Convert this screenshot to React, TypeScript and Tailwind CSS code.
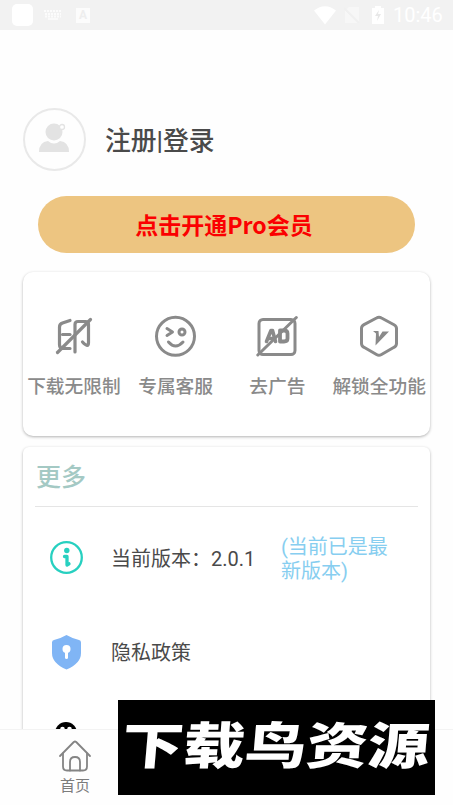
import type { ReactNode } from 'react';

const features: { label: string; icon: ReactNode }[] = [
  { label: '下载无限制', icon: <NoWatermarkIcon /> },
  { label: '专属客服', icon: <WinkIcon /> },
  { label: '去广告', icon: <NoAdIcon /> },
  { label: '解锁全功能', icon: <UnlockIcon /> },
];

function NoWatermarkIcon() {
  return (
    <svg className="w-[42px] h-[42px]" viewBox="0 0 42 42" fill="none" stroke="#8a8a8a" strokeWidth={3.2} strokeLinecap="round" strokeLinejoin="round">
      <path d="M17 5.5L9.5 8Q6.5 9 6.500 12V29.500Q6.500 33.500 10 33.500H17" />
      <path d="M9.500 19.500H17" />
      <path d="M22 37V9.500Q22 6.500 25 6.500H32.500Q35.500 6.500 35.500 9.500V27.500Q35.500 33.500 29.500 27" />
      <path d="M4.500 37.500L37.500 4.500" />
    </svg>
  );
}

function WinkIcon() {
  return (
    <svg className="w-[42px] h-[42px]" viewBox="0 0 42 42" fill="none" stroke="#8a8a8a" strokeWidth={3} strokeLinecap="round" strokeLinejoin="round">
      <circle cx="20.500" cy="21.300" r="19" />
      <path d="M12 13.500L17.500 17L12 20.500" />
      <circle cx="27" cy="17" r="3" />
      <path d="M13.500 27Q20.500 35 28 27" />
    </svg>
  );
}

function NoAdIcon() {
  return (
    <svg className="w-[42px] h-[42px]" viewBox="0 0 42 42" fill="none" stroke="#8a8a8a" strokeWidth={3} strokeLinecap="round" strokeLinejoin="round">
      <rect x="3" y="4.500" width="36" height="35" rx="4" />
      <path d="M10.500 26.500L15 15.500H16.500L19.500 26.500M12 23.500H18" strokeWidth={3.600} />
      <path d="M24 15.500H28Q31.500 15.500 31.500 18.500V23.500Q31.500 26.500 28 26.500H24Z" strokeWidth={3.800} />
      <path d="M1.800 40L40.300 2.500" />
    </svg>
  );
}

function UnlockIcon() {
  return (
    <svg className="w-[42px] h-[42px]" viewBox="0 0 42 42" fill="none" stroke="#8a8a8a" strokeWidth={3} strokeLinejoin="round">
      <path d="M18.500 3Q21 1.500 23.500 3L36 9.700Q38.500 11 38.500 13.500V28.500Q38.500 31 36 32.300L23.500 39.500Q21 41 18.500 39.500L6 32.300Q3.500 31 3.500 28.500V13.500Q3.500 11 6 9.700Z" />
      <path d="M15 16H20.500L21 22L24.500 16.500H31L17.500 30.500L18 18.500Z" fill="#8a8a8a" stroke="none" />
    </svg>
  );
}

function StatusBar() {
  return (
    <header className="h-[30px] shrink-0 bg-[#f2f2f2] flex items-center pl-3 pr-[10px] text-white">
      <div className="w-[21px] h-[22px] rounded-[5px] bg-white" />
      <svg className="w-[18px] h-[10px] ml-[11px]" viewBox="0 0 18 10" stroke="#fcfcfc" strokeWidth={2}>
        <path d="M0 1H18" strokeDasharray="2 1" />
        <path d="M1 4H17" strokeDasharray="2 1" />
        <path d="M1 6.500H17" strokeDasharray="2 1" />
        <path d="M4 9H14" strokeWidth={1.500} />
      </svg>
      <div className="w-[14px] h-[15px] ml-[14px] bg-[#fcfcfc] text-[#eeeeee] text-xs leading-[15px] font-bold text-center">A</div>
      <div className="ml-auto flex items-center">
        <svg className="w-[22px] h-[19px]" viewBox="0 0 22 19" fill="white">
          <path d="M0 4.500Q11 -4 22 4.500L11 18.500Z" />
        </svg>
        <svg className="w-4 h-4 ml-2" viewBox="0 0 16 16">
          <path d="M5 0H15V16H1V4Z" fill="#f7f7f7" />
          <path d="M0 1L15 16" stroke="#f0f0f0" strokeWidth={2} />
        </svg>
        <svg className="w-3 h-[18px] ml-3" viewBox="0 0 12 18">
          <path d="M3 0H9V2H12V18H0V2H3Z" fill="white" />
          <path d="M7 4L3 10H6L5 15L9 8H6Z" fill="#e8e8e8" />
        </svg>
        <span className="ml-[9px] text-[20px] leading-[30px] w-[50px] whitespace-nowrap">10:46</span>
      </div>
    </header>
  );
}

function InfoIcon() {
  return (
    <svg className="w-[34px] h-[34px]" viewBox="0 0 34 34" fill="none">
      <circle cx="16.500" cy="16.500" r="15.300" stroke="#27d0c0" strokeWidth={2.300} />
      <circle cx="16.800" cy="9.500" r="2.700" fill="#27d0c0" />
      <path d="M14.500 15.500H17V24M17 24L19 22.800" stroke="#27d0c0" strokeWidth={3.300} strokeLinecap="round" strokeLinejoin="round" />
    </svg>
  );
}

function ShieldIcon() {
  return (
    <svg className="w-[34px] h-[36px]" viewBox="0 0 34 36">
      <path d="M16.500 0Q22.500 3.500 29 5Q31 5.300 31 7.500V18Q31 28.500 16.500 34.500Q2 28.500 2 18V7.500Q2 5.300 4 5Q10.500 3.500 16.500 0Z" fill="#80b5f5" />
      <circle cx="16.500" cy="14" r="4" fill="white" />
      <path d="M16.500 15V22.500" stroke="white" strokeWidth={3} strokeLinecap="round" />
    </svg>
  );
}

function FaceIcon() {
  return (
    <svg className="w-[34px] h-[36px]" viewBox="0 0 34 36">
      <circle cx="17" cy="11" r="11" fill="black" />
      <ellipse cx="13.500" cy="7" rx="2.300" ry="2.300" fill="white" />
      <ellipse cx="20.500" cy="7" rx="2.300" ry="2.300" fill="white" />
    </svg>
  );
}

function HomeIcon() {
  return (
    <svg className="w-[34px] h-[34px]" viewBox="0 0 34 34" fill="none" stroke="#848484" strokeWidth={1.800} strokeLinecap="round" strokeLinejoin="round">
      <path d="M2 17L15.800 3Q17 2 18.200 3L32 17" />
      <path d="M5 14.500V27.500Q5 31.500 9 31.500H25Q29 31.500 29 27.500V14.500" />
      <path d="M12 31.500V23Q12 18 17 18Q22 18 22 23V31.500" />
    </svg>
  );
}

export default function App() {
  return (
    <div className="relative h-[805px] w-full overflow-hidden flex flex-col bg-[#fefefe] text-[#4a4a4a] font-[Roboto,'Noto_Sans_CJK_SC',sans-serif]">
      <StatusBar />

      <main className="flex-1 min-h-0 overflow-hidden px-[22px]">
        <section className="mt-[78px] h-[63px] flex items-center">
          <div className="w-[63px] h-[63px] ml-px rounded-full border-2 border-[#e9e9e9] flex justify-center">
            <svg className="w-[32px] h-[30px] mt-[13px] mr-[2px]" viewBox="0 0 32 30">
              <path d="M1 29Q1 19 10 18Q16 23 22 18Q31 19 31 29Z" fill="#e3e3e3" />
              <circle cx="16" cy="9" r="8.500" fill="#e3e3e3" />
              <circle cx="24" cy="4" r="2.500" fill="white" stroke="#e3e3e3" strokeWidth={1.300} />
            </svg>
          </div>
          <h1 className="ml-[19px] pt-[3px] text-[25.800px] leading-[36px] font-medium">注册|登录</h1>
        </section>

        <button className="mt-[25px] ml-4 w-[377px] h-[57px] rounded-full bg-[#edc581] text-[#fb0000] text-[23px] font-bold flex items-center justify-center font-['Noto_Sans_CJK_SC',sans-serif]">
          <span className="pr-[5px] pb-px">点击开通Pro会员</span>
        </button>

        <section className="mt-[19px] mx-px h-[164px] rounded-[10px] bg-white shadow-[0_1px_3px_rgba(0,0,0,0.3)] grid grid-cols-4 pt-[43px]">
          {features.map(({ label, icon }) => (
            <div key={label} className="flex flex-col items-center">
              {icon}
              <span className="mt-[16px] text-[18.7px] leading-7 font-medium text-[#8a8a8a] whitespace-nowrap">{label}</span>
            </div>
          ))}
        </section>

        <section className="mt-[11px] mx-px h-[400px] rounded-t-md bg-white shadow-[0_1px_3px_rgba(0,0,0,0.3)] px-3">
          <h2 className="h-[60px] border-b border-[#e5e5e5] pl-px text-[25px] leading-[62px] font-medium text-[#a4c9c4]">更多</h2>
          <div className="h-[102px] pl-[15px] flex items-center">
            <InfoIcon />
            <span className="ml-[27px] pt-[2px] w-[170px] text-[20px] whitespace-nowrap">当前版本：2.0.1</span>
            <span className="pt-px text-[20px] leading-6 text-[#87cef0] w-[112px]">(当前已是最新版本)</span>
          </div>
          <div className="h-[88px] pl-[15px] flex items-center">
            <ShieldIcon />
            <span className="ml-[27px] text-[20px]">隐私政策</span>
          </div>
          <div className="pt-[25px] pl-[14px]">
            <FaceIcon />
          </div>
        </section>
      </main>

      <nav className="h-[76px] shrink-0 bg-[#fefefe] border-t border-[#f3f3f3] flex">
        <div className="w-[150px] pt-[9px] flex flex-col items-center">
          <HomeIcon />
          <span className="mt-[3px] text-[15px] leading-5 text-[#7c7c7c]">首页</span>
        </div>
      </nav>

      <div className="absolute left-[118px] top-[700px] w-[317px] h-[95px] bg-black flex items-center justify-center">
        <span className="pr-[2px] pb-px text-[50px] leading-[60px] font-black text-white whitespace-nowrap scale-x-[1.23] -skew-x-[4deg]">下载鸟资源</span>
      </div>
    </div>
  );
}
